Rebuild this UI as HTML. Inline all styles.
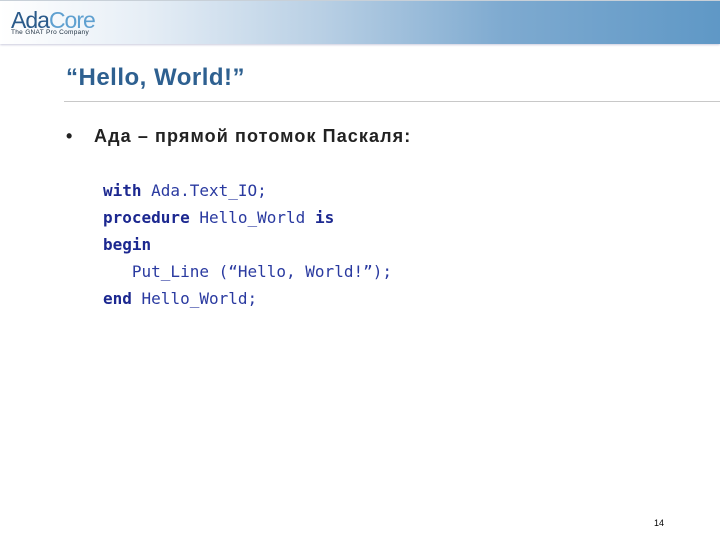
<!DOCTYPE html>
<html><head><meta charset="utf-8"><style>
body{margin:0;width:720px;height:540px;background:#fff;position:relative;overflow:hidden;font-family:"Liberation Sans",sans-serif}
.hdr{position:absolute;left:0;top:0;width:720px;height:43px;background:linear-gradient(90deg,#ffffff 0%,#e6eef6 20%,#b8cfe4 45%,#7eaad0 70%,#5f98c6 100%);border-top:1px solid #c8d0d8;box-shadow:0 1px 2px #ccd;}
.logo{position:absolute;left:11px;top:6px;font-size:23px;color:#2a5a8a;letter-spacing:-1px}
.logo span{color:#5fa0d0}
.tag{position:absolute;left:11px;top:28px;font-size:6.5px;color:#234;letter-spacing:.3px}
.title{position:absolute;left:66px;top:64px;font-size:24px;font-weight:bold;color:#2e6090;letter-spacing:.5px}
.line{position:absolute;left:64px;top:101px;width:656px;height:1px;background:#c8c8c8}
.bul{position:absolute;left:66px;top:126px;font-size:18px;font-weight:bold;color:#222}
.bul b{position:absolute;left:28px;white-space:nowrap;letter-spacing:1.1px}
.code{position:absolute;left:103px;top:177px;font-family:"DejaVu Sans Mono","Liberation Mono",monospace;font-size:16px;color:#2a3aa0;line-height:27px;white-space:pre}
.code b{color:#1c2890}
.pg{position:absolute;left:654px;top:518px;font-size:9px;color:#000}
</style></head><body>
<div class="hdr"><div class="logo">Ada<span>Core</span></div><div class="tag">The GNAT Pro Company</div></div>
<div class="title">“Hello, World!”</div>
<div class="line"></div>
<div class="bul">•<b>Ада – прямой потомок Паскаля:</b></div>
<div class="code"><b>with</b> Ada.Text_IO;
<b>procedure</b> Hello_World <b>is</b>
<b>begin</b>
   Put_Line (“Hello, World!”);
<b>end</b> Hello_World;</div>
<div class="pg">14</div>
</body></html>
